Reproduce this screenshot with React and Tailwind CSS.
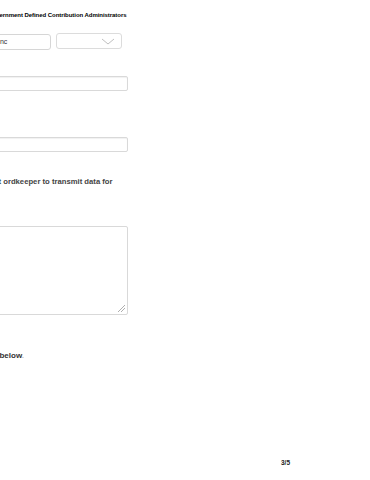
export default function App() {
  return (
    <div className="relative w-[370px] h-[480px] overflow-hidden bg-white font-['Liberation_Sans',Arial,sans-serif]">
      {/* form column, its left side is scrolled out of view */}
      <div className="flex flex-col w-[128px]">
        <div className="h-[10px]" />
        <p className="-ml-[12px] whitespace-nowrap text-[6px] leading-[10px] font-bold text-black tracking-[-0.05px]">
          Government Defined Contribution Administrators
        </p>

        <div className="flex gap-[5px] mt-[14px] w-[122px]">
          <div className="-ml-[20px] w-[71px] h-[16px] flex items-center pl-[17px] border border-[#d6d6d6] rounded-[3px] text-[7px] text-[#333]">
            Inc
          </div>
          <div className="flex-1 h-[16px] flex items-center justify-end pr-[6px] border border-[#dcdcdc] rounded-[3px] -mt-[1px]">
            <svg width="14" height="7" viewBox="0 0 14 7" fill="none">
              <path d="M1 1 L7 6 L13 1" stroke="#b8b8b8" strokeWidth="0.9" />
            </svg>
          </div>
        </div>

        <div className="mt-[26px] -ml-[20px] h-[15px] border border-[#d9d9d9] rounded-[2px] shadow-[inset_0_1px_1px_rgba(0,0,0,0.06)]" />

        <div className="mt-[46px] -ml-[20px] h-[15px] border border-[#d9d9d9] rounded-[2px] shadow-[inset_0_1px_1px_rgba(0,0,0,0.06)]" />

        <p className="mt-[25px] -ml-[63px] whitespace-nowrap text-[7.7px] leading-[10px] font-bold text-[#444]">
          Authorize current ordkeeper to transmit data for
        </p>

        <div className="mt-[39px] -ml-[20px] h-[89px] relative border border-[#d9d9d9] rounded-[2px]">
          <svg className="absolute right-[1px] bottom-[1px]" width="10" height="10" viewBox="0 0 10 10" fill="none">
            <path d="M9 2 L2 9 M9 5 L5 9" stroke="#9a9a9a" strokeWidth="0.8" />
          </svg>
        </div>

        <p className="mt-[36px] -ml-[17px] whitespace-nowrap text-[8px] leading-[10px] font-bold text-[#333]">
          See below<span className="text-[#bbb]">.</span>
        </p>
      </div>

      <div className="absolute left-[281px] top-[458px] text-[6.5px] font-bold text-[#222]">3/5</div>
    </div>
  )
}
